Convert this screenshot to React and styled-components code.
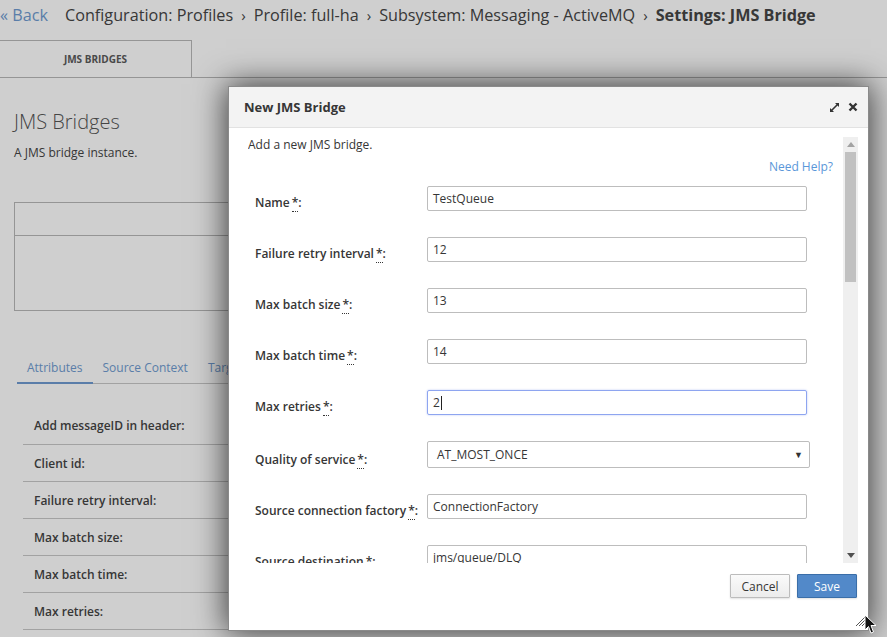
import styled, { createGlobalStyle } from 'styled-components'

const GlobalStyle = createGlobalStyle`
  html, body {
    margin: 0;
    padding: 0;
    font-family: "Open Sans", "Liberation Sans", sans-serif;
  }
  * { box-sizing: border-box; }
`

const Page = styled.div`
  position: relative;
  width: 887px;
  height: 637px;
  overflow: hidden;
  background: #fff;
  color: #444;
`

const Breadcrumb = styled.div`
  display: flex;
  align-items: center;
  height: 30px;
  font-size: 16.2px;
  color: #454545;
  white-space: nowrap;
`

const Back = styled.a`
  color: #6f9bd0;
  margin-right: 17px;
`

const Crumb = styled.span`
  font-weight: ${p => (p.$current ? 700 : 400)};
`

const Sep = styled.span`
  margin: 0 8px;
  font-size: 15px;
`

const TabBar = styled.div`
  display: flex;
  margin-top: 10px;
  height: 38px;
  border-bottom: 1px solid #b8b8b8;
`

const TopTab = styled.div`
  width: 192px;
  display: flex;
  align-items: center;
  justify-content: center;
  border-top: 1px solid #b8b8b8;
  border-right: 1px solid #b8b8b8;
  font-size: 10px;
  font-weight: 700;
  color: #5a5a5a;
  text-transform: uppercase;
`

const Content = styled.div`
  padding-left: 14px;
`

const Heading = styled.h1`
  margin: 30px 0 0;
  font-size: 20px;
  font-weight: 300;
  line-height: 28px;
  color: #555;
`

const Lead = styled.p`
  margin: 8px 0 0;
  font-size: 12px;
  color: #444;
`

const Table = styled.div`
  margin-top: 41px;
  width: 700px;
  border: 1px solid #b8b8b8;
  border-right: none;
`

const TableHead = styled.div`
  height: 33px;
  border-bottom: 1px solid #b8b8b8;
`

const TableBody = styled.div`
  height: 74px;
`

const SubTabs = styled.div`
  display: flex;
  margin: 48px 0 0 3px;
  width: 700px;
  border-bottom: 1px solid #c8c8c8;
`

const SubTab = styled.div`
  padding: 0 10px 6px;
  font-size: 12px;
  color: #6f9bd0;
  border-bottom: 2px solid ${p => (p.$active ? '#6f9bd0' : 'transparent')};
  margin-bottom: -1px;
  font-weight: 400;
`

const AttrList = styled.div`
  margin: 23px 0 0 9px;
  width: 700px;
`

const AttrRow = styled.div`
  height: 37px;
  display: flex;
  align-items: center;
  padding-left: 11px;
  border-bottom: 1px solid #c8c8c8;
  font-size: 12px;
  font-weight: 600;
  color: #444;
  &:first-child { height: 38px; }
`

const Backdrop = styled.div`
  position: absolute;
  inset: 0;
  background: rgba(0, 0, 0, 0.19);
`

const Dialog = styled.div`
  position: absolute;
  left: 228px;
  top: 86px;
  width: 641px;
  height: 545px;
  background: #fff;
  border: 1px solid #8a8a8a;
  box-shadow: 0 0 30px 2px rgba(0, 0, 0, 0.7);
  display: flex;
  flex-direction: column;
  color: #363636;
`

const DialogHeader = styled.div`
  height: 41px;
  flex: none;
  display: flex;
  align-items: center;
  justify-content: space-between;
  padding: 0 10px 0 15px;
  background: #f3f3f3;
  border-bottom: 1px solid #e2e2e2;
`

const DialogTitle = styled.div`
  font-size: 13px;
  font-weight: 700;
  color: #363636;
`

const HeaderTools = styled.div`
  display: flex;
  align-items: center;
  gap: 8px;
`

const DialogBody = styled.div`
  display: flex;
  padding: 9px 10px 0 19px;
  height: 435px;
  flex: none;
`

const ScrollArea = styled.div`
  flex: 1;
  height: 426px;
  overflow: hidden;
  padding-right: 10px;
`

const Intro = styled.div`
  font-size: 12px;
  line-height: 16px;
`

const HelpRow = styled.div`
  display: flex;
  justify-content: flex-end;
  margin-top: 6px;
`

const Help = styled.a`
  font-size: 12px;
  line-height: 16px;
  color: #5a97d9;
`

const Form = styled.div`
  margin: 11px 0 0 7px;
  display: flex;
  flex-direction: column;
  gap: 26px;
`

const Field = styled.div`
  display: grid;
  grid-template-columns: 172px auto;
  align-items: start;
`

const Label = styled.label`
  padding-top: ${p => (p.$select ? 11 : 9)}px;
  font-size: 12px;
  line-height: 16px;
  font-weight: 600;
  color: #363636;
  white-space: nowrap;
`

const Req = styled.abbr`
  text-decoration: none;
  border-bottom: 1px dotted #363636;
  margin-left: 2px;
`

const Input = styled.div`
  width: 380px;
  height: 25px;
  padding: 0 5px;
  display: flex;
  align-items: center;
  border: 1px solid ${p => (p.$focus ? '#8ea5f0' : '#bdbdbd')};
  box-shadow: ${p => (p.$focus ? '0 0 2px rgba(90,120,230,0.45)' : 'none')};
  border-radius: 2px;
  font-size: 12px;
  color: #363636;
`

const Caret = styled.span`
  display: inline-block;
  width: 1px;
  height: 14px;
  background: #222;
  margin-left: 1px;
`

const Select = styled(Input)`
  width: 383px;
  height: 27px;
  padding: 0 6px 0 9px;
  justify-content: space-between;
`

const Arrow = styled.span`
  font-size: 9px;
  color: #333;
`

const Scrollbar = styled.div`
  width: 15px;
  height: 426px;
  background: #efefef;
  display: flex;
  flex-direction: column;
  align-items: center;
`

const ScrollBtn = styled.div`
  height: 15px;
  width: 15px;
  display: flex;
  align-items: center;
  justify-content: center;
`

const Thumb = styled.div`
  width: 11px;
  height: 130px;
  background: #c1c1c1;
`

const Spacer = styled.div`
  flex: 1;
`

const Footer = styled.div`
  flex: 1;
  display: flex;
  justify-content: flex-end;
  align-items: flex-start;
  gap: 7px;
  padding: 11px 11px 0 0;
`

const Button = styled.button`
  width: 60px;
  height: 24px;
  font-family: inherit;
  font-size: 12px;
  border-radius: 1px;
  border: 1px solid ${p => (p.$primary ? '#3a6ea8' : '#bcbcbc')};
  background: ${p => (p.$primary ? '#5289c9' : 'linear-gradient(#fafafa, #ececec)')};
  color: ${p => (p.$primary ? '#fff' : '#363636')};
  box-shadow: 0 1px 2px rgba(0, 0, 0, 0.12);
`

const Grip = styled.svg`
  position: absolute;
  left: 855px;
  top: 615px;
`

const Cursor = styled.svg`
  position: absolute;
  left: 864px;
  top: 614px;
`

const fields = [
  { label: 'Name', value: 'TestQueue' },
  { label: 'Failure retry interval', value: '12' },
  { label: 'Max batch size', value: '13' },
  { label: 'Max batch time', value: '14' },
  { label: 'Max retries', value: '2', focus: true },
  { label: 'Quality of service', value: 'AT_MOST_ONCE', select: true },
  { label: 'Source connection factory', value: 'ConnectionFactory' },
  { label: 'Source destination', value: 'jms/queue/DLQ' },
  { label: 'Target connection factory', value: 'ConnectionFactory' },
]

const attrs = [
  'Add messageID in header:',
  'Client id:',
  'Failure retry interval:',
  'Max batch size:',
  'Max batch time:',
  'Max retries:',
]

const crumbs = [
  'Configuration: Profiles',
  'Profile: full-ha',
  'Subsystem: Messaging - ActiveMQ',
]

const ExpandIcon = () => (
  <svg width="11" height="11" viewBox="0 0 11 11">
    <path d="M2.5 8.5 L8.5 2.5" stroke="#333" strokeWidth="1.6" />
    <path d="M6 1 L10 1 L10 5 Z" fill="#333" />
    <path d="M1 6 L1 10 L5 10 Z" fill="#333" />
  </svg>
)

const CloseIcon = () => (
  <svg width="10" height="10" viewBox="0 0 10 10">
    <path d="M1.5 1.5 L8.5 8.5 M8.5 1.5 L1.5 8.5" stroke="#333" strokeWidth="2.4" />
  </svg>
)

const App = () => {
  return (
    <Page>
      <GlobalStyle />
      <Breadcrumb>
        <Back>« Back</Back>
        {crumbs.map(c => (
          <span key={c}>
            <Crumb>{c}</Crumb>
            <Sep>›</Sep>
          </span>
        ))}
        <Crumb $current>Settings: JMS Bridge</Crumb>
      </Breadcrumb>
      <TabBar>
        <TopTab>JMS Bridges</TopTab>
      </TabBar>
      <Content>
        <Heading>JMS Bridges</Heading>
        <Lead>A JMS bridge instance.</Lead>
        <Table>
          <TableHead />
          <TableBody />
        </Table>
        <SubTabs>
          <SubTab $active>Attributes</SubTab>
          <SubTab>Source Context</SubTab>
          <SubTab>Target Context</SubTab>
        </SubTabs>
        <AttrList>
          {attrs.map(a => (
            <AttrRow key={a}>{a}</AttrRow>
          ))}
        </AttrList>
      </Content>

      <Backdrop />

      <Dialog>
        <DialogHeader>
          <DialogTitle>New JMS Bridge</DialogTitle>
          <HeaderTools>
            <ExpandIcon />
            <CloseIcon />
          </HeaderTools>
        </DialogHeader>
        <DialogBody>
          <ScrollArea>
            <Intro>Add a new JMS bridge.</Intro>
            <HelpRow>
              <Help>Need Help?</Help>
            </HelpRow>
            <Form>
              {fields.map(f => (
                <Field key={f.label}>
                  <Label $select={f.select}>
                    {f.label}
                    <Req title="Required">*</Req>:
                  </Label>
                  {f.select ? (
                    <Select>
                      {f.value}
                      <Arrow>▼</Arrow>
                    </Select>
                  ) : (
                    <Input $focus={f.focus}>
                      {f.value}
                      {f.focus && <Caret />}
                    </Input>
                  )}
                </Field>
              ))}
            </Form>
          </ScrollArea>
          <Scrollbar>
            <ScrollBtn>
              <svg width="8" height="5" viewBox="0 0 8 5"><path d="M0 5 L4 0 L8 5 Z" fill="#a3a3a3" /></svg>
            </ScrollBtn>
            <Thumb />
            <Spacer />
            <ScrollBtn>
              <svg width="8" height="5" viewBox="0 0 8 5"><path d="M0 0 L8 0 L4 5 Z" fill="#505050" /></svg>
            </ScrollBtn>
          </Scrollbar>
        </DialogBody>
        <Footer>
          <Button>Cancel</Button>
          <Button $primary>Save</Button>
        </Footer>
      </Dialog>

      <Grip width="12" height="12" viewBox="0 0 12 12">
        <path d="M1 11 L11 1 M4 11 L11 4 M7 11 L11 7" stroke="#555" strokeWidth="1" />
      </Grip>
      <Cursor width="13" height="21" viewBox="0 0 13 21">
        <path d="M1 1 L1 16 L4.5 12.5 L7 19 L9.5 18 L7 11.5 L12 11.5 Z" fill="#111" stroke="#fff" strokeWidth="1" />
      </Cursor>
    </Page>
  )
}

export default App
